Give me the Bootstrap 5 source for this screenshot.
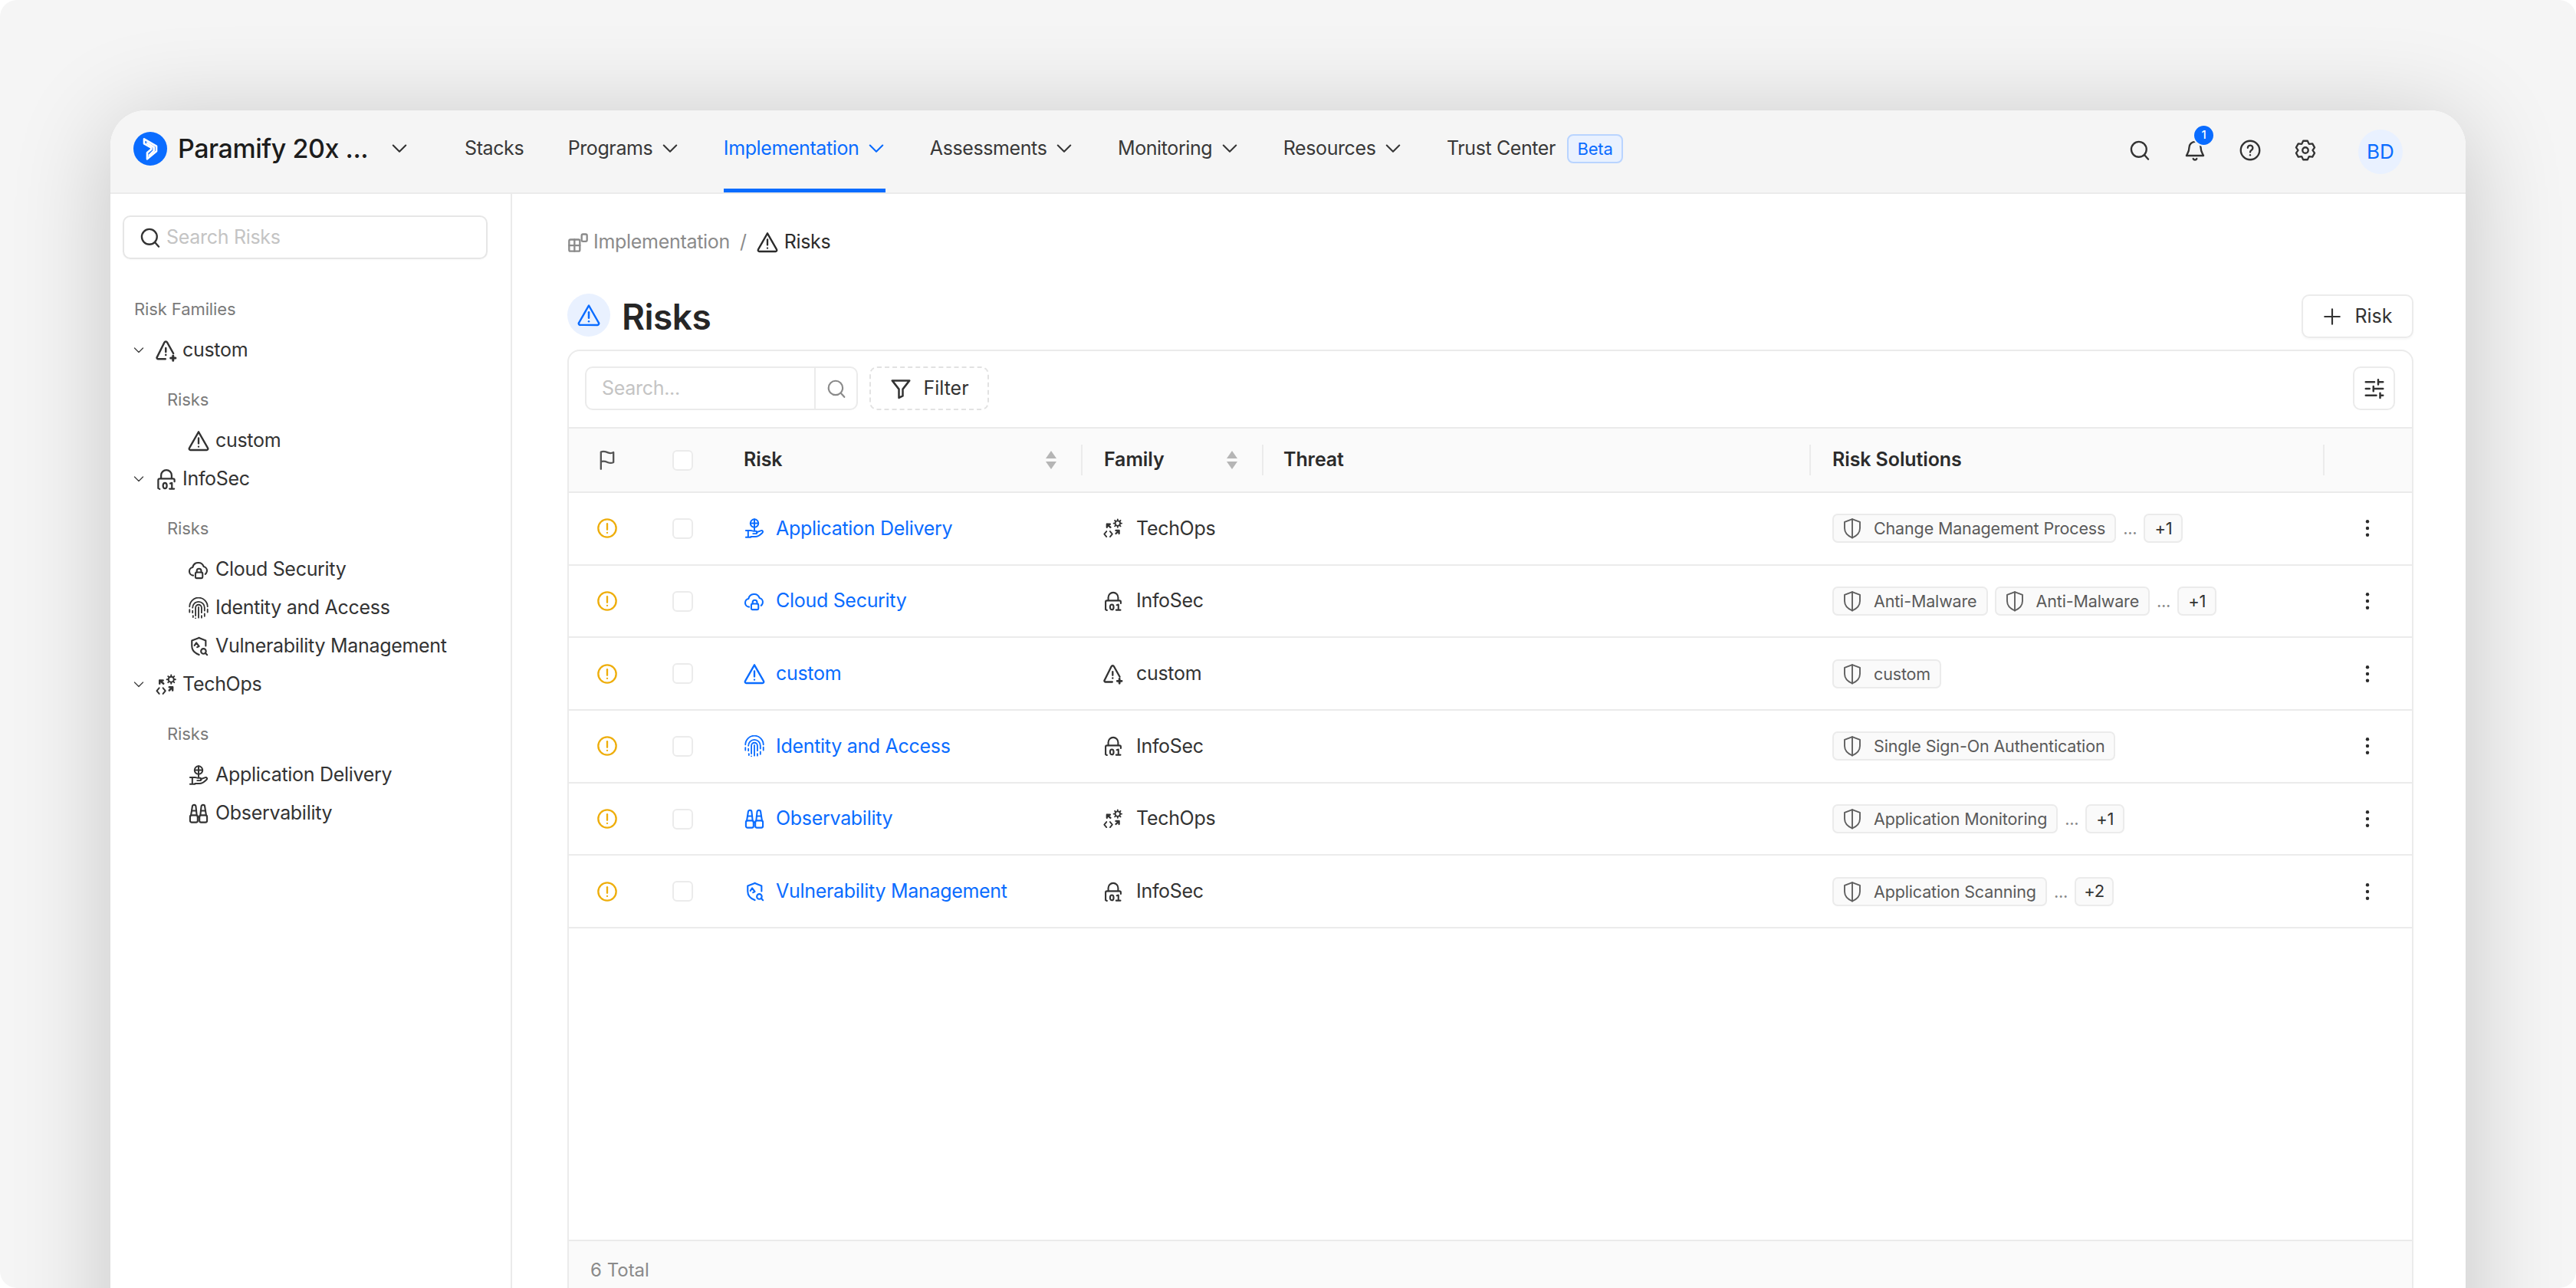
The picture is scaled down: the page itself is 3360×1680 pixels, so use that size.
<!DOCTYPE html>
<html lang="en">
<head>
    <meta charset="UTF-8">
    <meta name="viewport" content="width=device-width, initial-scale=1.0">
    <title>Risks - Paramify</title>
    <link href="https://cdn.jsdelivr.net/npm/bootstrap@5.3.3/dist/css/bootstrap.min.css" rel="stylesheet">
    <style>
        html, body { height: 1680px; margin: 0; overflow: hidden; background: #fff; }
        body { font-family: Inter, "Liberation Sans", sans-serif; color: #333; font-size: 25px; letter-spacing: -.3px; }
        svg { display: block; flex: none; fill: none; stroke: currentColor; stroke-width: 2; stroke-linecap: round; stroke-linejoin: round; }
        .sprite-sheet { position: absolute; width: 0; height: 0; }
        .stage { height: 1680px; background: #f5f5f5; border-radius: 22px; padding: 144px 144px 0; overflow: hidden; }
        .app-window { height: 1700px; background: #fff; border-radius: 46px 46px 0 0; box-shadow: 0 16px 130px rgba(0,0,0,.2); overflow: hidden; }

        .top-bar { height: 109px; background: #f5f5f5; border-bottom: 2px solid #ebebeb; padding: 0 0 0 30px; }
        .brand-dot { width: 44px; height: 44px; border-radius: 50%; background: #0a6cff; color: #fff; margin-bottom: 8px; }
        .brand-name { font-size: 34px; font-weight: 500; color: #1c1c1c; width: 245px; margin: 0 0 8px 14px; letter-spacing: -.45px; white-space: nowrap; }
        .brand-caret { width: 24px; height: 24px; margin: 0 73px 8px 32px; color: #333; }
        .top-link { height: 107px; display: flex; align-items: center; gap: 11px; color: #383838; text-decoration: none; margin-right: 57.5px; border-bottom: 5px solid transparent; padding-bottom: 2px; white-space: nowrap; letter-spacing: -.4px; }
        .top-link.is-active { color: #0a6cff; border-bottom-color: #0a6cff; }
        .top-link svg { width: 24px; height: 24px; }
        .top-link .beta-tag { margin-left: 4px; letter-spacing: -.2px; }
        .beta-tag { width: 73px; height: 38px; border: 2px solid #b9d4ff; border-radius: 8px; background: #e9f1ff; color: #0a6cff; font-size: 22px; display: flex; align-items: center; justify-content: center; }
        .top-tools { margin-left: auto; padding-right: 82px; gap: 44px; color: #333; }
        .top-tools svg { width: 28px; height: 28px; margin-bottom: 4px; }
        .bell-wrap { position: relative; }
        .bell-count { position: absolute; top: -20px; left: 11px; width: 29px; height: 29px; border-radius: 50%; background: #0a6cff; border: 2px solid #f5f5f5; color: #fff; font-size: 15px; font-weight: 500; display: flex; align-items: center; justify-content: center; letter-spacing: 0; }
        .user-dot { width: 58px; height: 58px; border-radius: 50%; background: #e9f1ff; color: #0a6cff; font-size: 26px; margin-left: 11px; letter-spacing: 0; }

        .side-col { width: 524px; flex: none; border-right: 2px solid #ebebeb; padding: 28px 0 0 16px; height: 1590px; }
        .side-search { width: 476px; height: 57px; border: 2px solid #e6e6e6; border-radius: 10px; padding-left: 20px; gap: 7px; color: #c4c4c4; box-shadow: 0 1px 2px rgba(0,0,0,.03); }
        .side-search svg { width: 28px; height: 28px; color: #333; }
        .side-title { color: #7a7a7a; font-size: 22px; margin: 52px 0 16px 15px; line-height: 26px; letter-spacing: -.1px; }
        .side-fam { height: 50px; padding-left: 13px; }
        .side-fam .tw { width: 16px; height: 16px; margin-right: 13px; color: #444; }
        .side-fam .ic { width: 30px; height: 30px; margin-right: 6px; }
        .side-sub { color: #7a7a7a; font-size: 22px; margin: 0 0 0 58px; height: 26px; line-height: 26px; letter-spacing: -.1px; }
        .side-sub-gap { padding: 26px 0 16px; }
        .side-item { height: 50px; padding-left: 85px; }
        .side-item svg { width: 28px; height: 28px; margin-right: 8px; }

        .main-col { flex: 1; padding: 0 68px 0 72px; min-width: 0; }
        .crumbs { height: 130px; padding-bottom: 4px; color: #8b8b8b; }
        .crumbs svg { width: 28px; height: 28px; }
        .crumb-first { margin-right: 6px; }
        .crumb-sep { margin: 0 13px; }
        .crumb-now { color: #2b2b2b; }
        .page-head { height: 73px; align-items: flex-start !important; }
        .head-dot { width: 56px; height: 56px; border-radius: 50%; background: #e9f1ff; color: #0a6cff; }
        .head-dot svg { width: 30px; height: 30px; }
        .head-text { font-size: 46px; font-weight: 600; color: #262626; margin-left: 15px; line-height: 60px; letter-spacing: -.5px; }
        .add-btn { margin-left: auto; margin-top: 1px; width: 146px; height: 57px; border: 2px solid #ebebeb; border-radius: 10px; background: #fff; color: #333; gap: 16px; padding: 0; box-shadow: 0 2px 3px rgba(0,0,0,.03); }
        .add-btn svg { width: 26px; height: 26px; }

        .data-box { border: 2px solid #ebebeb; border-radius: 16px 16px 0 0; height: 1300px; overflow: hidden; }
        .tool-row { height: 99px; padding: 20px 22px 0 21px; gap: 15px; align-items: flex-start !important; }
        .find-box { width: 356px; height: 57px; border: 2px solid #ebebeb; border-radius: 10px; color: #c4c4c4; }
        .find-text { flex: 1; padding-left: 20px; }
        .find-btn { width: 55px; height: 100%; border-left: 2px solid #ebebeb; color: #8a8a8a; }
        .find-btn svg { width: 26px; height: 26px; }
        .filter-btn { width: 156px; height: 57px; border: 2px dashed #e2e2e2; border-radius: 10px; color: #333; gap: 14px; background: #fff; padding: 0; }
        .filter-btn svg { width: 30px; height: 30px; }
        .tune-btn { margin-left: auto; width: 55px; height: 57px; border: 2px solid #ebebeb; border-radius: 10px; color: #333; background: #fff; padding: 0; }
        .tune-btn svg { width: 30px; height: 30px; }

        .risk-table { table-layout: fixed; width: 100%; margin: 0; border-collapse: collapse; }
        .risk-table th { background: #fafafa; height: 84px; border-top: 2px solid #ebebeb; border-bottom: 2px solid #ebebeb; font-weight: 600; color: #2b2b2b; vertical-align: middle; padding: 0; position: relative; letter-spacing: -.1px; }
        .risk-table td { height: 94.7px; border-bottom: 2px solid #ebebeb; vertical-align: middle; padding: 0; color: #333; }
        .risk-table th:nth-child(1), .risk-table th:nth-child(2) { width: 99px; }
        .risk-table th:nth-child(3) { width: 470px; }
        .risk-table th:nth-child(4) { width: 236px; }
        .risk-table th:nth-child(5) { width: 714px; }
        .risk-table th:nth-child(6) { width: 670px; }
        .col-sep::before { content: ""; position: absolute; left: 0; top: 21px; height: 40px; width: 2px; background: #ebebeb; }
        .risk-table .p30 { padding-left: 30px; }
        .risk-table .p28 { padding-left: 28px; }
        .flag-ic { width: 28px; height: 28px; margin: 0 auto; color: #555; }
        .warn-ic { width: 28px; height: 28px; margin: 0 auto; color: #eeae0c; }
        .tick { width: 27px; height: 27px; border: 2px solid #ebebeb; border-radius: 6px; margin: 0 auto; background: #fff; }
        .sort-ic { width: 16px; height: 26px; margin-left: auto; margin-right: 31px; color: #b5b5b5; }
        .sort-ic path { fill: currentColor; stroke: none; }
        .risk-link { color: #0a6cff; text-decoration: none; gap: 14px; }
        .risk-link svg, .fam-cell svg { width: 28px; height: 28px; }
        .fam-cell { gap: 16px; }
        .sol-tag { height: 38px; border: 2px solid #ebebeb; border-radius: 7px; background: #fafafa; color: #5a5a5a; font-size: 21.5px; letter-spacing: -.15px; padding: 0 12px 0 9px; gap: 13px; white-space: nowrap; }
        .sol-tag svg { width: 30px; height: 30px; color: #5e5e5e; stroke-width: 1.5; }
        .more-dots { color: #8a8a8a; font-size: 22px; line-height: 1; }
        .more-num { width: 51px; height: 38px; border: 2px solid #ebebeb; border-radius: 7px; background: #fafafa; color: #333; font-size: 22px; }
        .tags { gap: 9px; }
        .kebab { width: 28px; height: 28px; margin: 0 auto; color: #2b2b2b; }
        .table-foot { background: #fafafa; border-top: 2px solid #ebebeb; height: 90px; margin-top: 406px; padding: 20px 0 0 28px; color: #8a8a8a; font-size: 24px; letter-spacing: 0; }
    </style>
</head>
<body>
<!-- icon sprites -->
<svg class="sprite-sheet">
    <defs>
        <symbol id="i-warn" viewBox="0 0 24 24"><path d="M12 2 1.700 20a1.500 1.500 0 0 0 1.300 2.300h18a1.500 1.500 0 0 0 1.300-2.300z"/><path d="M12 9v6"/><path d="M12 18.500v.1"/></symbol>
        <symbol id="i-warnplus" viewBox="0 0 24 24"><path d="M11 21H3.200a1.200 1.200 0 0 1-1-1.800L10 3.600a1.600 1.600 0 0 1 2.800 0l6.500 11.600"/><path d="M11.400 9.500v4"/><path d="M11.400 16.600v.1"/><path d="M19 17.500v5M16.500 20h5" stroke-width="2.400"/></symbol>
        <symbol id="i-lock" viewBox="0 0 24 24" stroke-width="1.800"><path d="M6.500 11V8a5.500 5.500 0 0 1 11 0v3"/><path d="M20.500 14.500V13a1.500 1.500 0 0 0-1.500-1.500H5A1.500 1.500 0 0 0 3.500 13v8.500l1.500.8"/><ellipse cx="10.500" cy="18.800" rx="2" ry="2.900"/><path d="M16 16.500l1.800-.6v6M15.300 22h4.800"/></symbol>
        <symbol id="i-cloud" viewBox="0 0 24 24" stroke-width="1.800"><path d="M6 18.500a4.600 4.600 0 0 1-.6-9.100 6.400 6.400 0 0 1 12.300-.9 4.800 4.800 0 0 1 3.600 5.500 4.700 4.700 0 0 1-1.800 3"/><rect x="8.500" y="15" width="8" height="6.500" rx="1.200"/><path d="M10 15v-1.600a2.500 2.500 0 0 1 5 0V15"/></symbol>
        <symbol id="i-finger" viewBox="2.500 1.500 19 21.500" stroke-width="1.400"><path d="M3 11a9 9 0 0 1 18 0"/><path d="M6 12a6 6 0 0 1 12 0v3"/><path d="M9 20v-8a3 3 0 0 1 6 0v5"/><path d="M12 11.500V22"/><path d="M3 14v2.500M6 15v2M6.500 20v1.500M18 18v2.500M21 13.500v3M15 20v2M9 22.500v.1"/></symbol>
        <symbol id="i-vuln" viewBox="0 0 24 24" stroke-width="1.800"><path d="M12.500 2.500 4.500 5.500v6c0 4.800 3 8 8 10"/><path d="M12.500 2.500 20 5.500v6"/><path d="M7.500 11l2-3 3 4-2 1"/><circle cx="17.500" cy="17.500" r="2.800"/><path d="m19.600 19.600 2 2"/></symbol>
        <symbol id="i-ops" viewBox="0 0 24 24" stroke-width="1.600"><circle cx="17" cy="6.500" r="2.800"/><path d="M17 2v1.200M17 9.800V11M12.500 6.500h1.200M20.300 6.500h1.200M13.800 3.300l.8.800M19.400 8.900l.8.800M20.200 3.300l-.8.800M13.800 9.700l.8-.8"/><path d="M5 7.500 9 11M5 11V7.500h3.500" stroke-width="2"/><path d="M18.500 14.500 15 18M18.500 18v-3.500H15" stroke-width="2"/><path d="M4.500 15.500l-2.500 3 2.500 3M8.500 15.500l2.500 3-2.500 3"/></symbol>
        <symbol id="i-deliver" viewBox="0 0 24 24" stroke-width="1.700"><circle cx="12" cy="6.500" r="4.500"/><path d="M12 2v9M8 6.500h8"/><path d="M12 11v3"/><path d="M2.500 14.500h5.500c1.500 0 2 .8 3 .8h2.500a1.400 1.400 0 0 1 0 2.800h-3"/><path d="M14.500 16.500l5-1.800c1.600-.5 2.700 1.200 1.400 2.400-2.500 2.500-5 4.400-8 4.400H8"/><path d="M5 14.500V22M2.500 22H8"/></symbol>
        <symbol id="i-bino" viewBox="0 0 24 24" stroke-width="1.800"><rect x="2.500" y="14" width="8.500" height="8" rx="1.800"/><rect x="13" y="14" width="8.500" height="8" rx="1.800"/><path d="M3.500 14 5 4.500a2 2 0 0 1 4 0L10 14"/><path d="M14 14l1-9.500a2 2 0 0 1 4 0L20.500 14"/><path d="M11 16h2M4.500 9h5M14.500 9h5"/></symbol>
        <symbol id="i-shield" viewBox="0 0 24 24"><path d="M12 2.500 4 5.500v6.500c0 4.500 3.500 8 8 10 4.500-2 8-5.500 8-10V5.500z"/><path d="M12 2.500V22"/></symbol>
        <symbol id="i-chev" viewBox="0 0 16 16" stroke-width="1.400"><path d="m2.500 5 5.500 5.500L13.500 5"/></symbol>
        <symbol id="i-search" viewBox="0 0 24 24"><circle cx="11" cy="11" r="8.500"/><path d="m17.500 17.500 4 4.500"/></symbol>
        <symbol id="i-warncircle" viewBox="0 0 24 24"><circle cx="12" cy="12" r="10"/><path d="M12 7v6.500"/><path d="M12 17v.1"/></symbol>
        <symbol id="i-kebab" viewBox="0 0 24 24"><circle cx="12" cy="4.500" r="1.900" fill="currentColor" stroke="none"/><circle cx="12" cy="12" r="1.900" fill="currentColor" stroke="none"/><circle cx="12" cy="19.500" r="1.900" fill="currentColor" stroke="none"/></symbol>
    </defs>
</svg>

<div class="stage">
    <div class="app-window">
        <div class="top-bar d-flex align-items-center">
            <div class="brand-dot d-flex align-items-center justify-content-center">
                <svg width="32" height="32" viewBox="0 0 24 24" stroke-width=".9"><path d="M6 2.500l12 7v5L9 22v-6l4-3.500V11L6 7z"/><path d="M9 6.500l6.500 4v3.500L11 18.500"/></svg>
            </div>
            <div class="brand-name">Paramify 20x ...</div>
            <svg class="brand-caret"><use href="#i-chev"/></svg>
            <a class="top-link">Stacks</a>
            <a class="top-link">Programs <svg><use href="#i-chev"/></svg></a>
            <a class="top-link is-active">Implementation <svg><use href="#i-chev"/></svg></a>
            <a class="top-link">Assessments <svg><use href="#i-chev"/></svg></a>
            <a class="top-link">Monitoring <svg><use href="#i-chev"/></svg></a>
            <a class="top-link">Resources <svg><use href="#i-chev"/></svg></a>
            <a class="top-link">Trust Center <span class="beta-tag">Beta</span></a>
            <div class="top-tools d-flex align-items-center">
                <svg><use href="#i-search"/></svg>
                <div class="bell-wrap">
                    <svg viewBox="0 0 24 24"><path d="M18.500 9a6.500 6.500 0 0 0-13 0c0 5.500-2.500 7-3 9h19c-.5-2-3-3.500-3-9z"/><path d="M10 21.500a2.200 2.200 0 0 0 4 0"/></svg>
                    <span class="bell-count">1</span>
                </div>
                <svg viewBox="0 0 24 24"><circle cx="12" cy="12" r="10.500"/><path d="M9.300 9.300a2.800 2.800 0 1 1 4.300 2.400c-1 .7-1.600 1.200-1.600 2.500"/><path d="M12 17.300v.1"/></svg>
                <svg viewBox="0 0 24 24"><circle cx="12" cy="12" r="3.200"/><path id="gearPath"/></svg>
                <div class="user-dot d-flex align-items-center justify-content-center">BD</div>
            </div>
        </div>

        <div class="d-flex">
            <aside class="side-col">
                <div class="side-search d-flex align-items-center"><svg><use href="#i-search"/></svg>Search Risks</div>
                <div class="side-title">Risk Families</div>
                <div id="sideTree"></div>
            </aside>

            <main class="main-col">
                <div class="crumbs d-flex align-items-center">
                    <svg viewBox="0 0 24 24" stroke-width="1.700" class="crumb-first"><rect x="2" y="9" width="12" height="13" rx="1.500"/><path d="M2 15.500h12M8 9v13"/><rect x="16" y="3" width="6" height="8" rx="1.500"/></svg>
                    Implementation
                    <span class="crumb-sep">/</span>
                    <svg class="crumb-now me-2"><use href="#i-warn"/></svg>
                    <span class="crumb-now">Risks</span>
                </div>
                <div class="page-head d-flex align-items-center">
                    <div class="head-dot d-flex align-items-center justify-content-center"><svg><use href="#i-warn"/></svg></div>
                    <div class="head-text">Risks</div>
                    <button class="add-btn d-flex align-items-center justify-content-center" type="button">
                        <svg viewBox="0 0 24 24"><path d="M12 3v18M3 12h18"/></svg>Risk
                    </button>
                </div>
                <div class="data-box">
                    <div class="tool-row d-flex align-items-center">
                        <div class="find-box d-flex align-items-center">
                            <div class="find-text">Search...</div>
                            <div class="find-btn d-flex align-items-center justify-content-center"><svg><use href="#i-search"/></svg></div>
                        </div>
                        <button class="filter-btn d-flex align-items-center justify-content-center" type="button">
                            <svg viewBox="0 0 24 24"><path d="M3 3.500h18l-7 9v7l-4 2v-9z"/></svg>Filter
                        </button>
                        <button class="tune-btn d-flex align-items-center justify-content-center" type="button">
                            <svg viewBox="0 0 24 24"><path d="M3 5h9M16 5h5M16 2.500v5M3 12h4M11 12h10M11 9.500v5M3 19h11M18 19h3M18 16.500v5"/></svg>
                        </button>
                    </div>
                    <table class="risk-table">
                        <thead>
                            <tr>
                                <th><svg class="flag-ic" viewBox="0 0 24 24"><path d="M5 22V3c3-1.500 6 0 8 .8s4 .8 6-.3v11c-2 1.100-4 1.100-6 .3s-5-2.300-8-.8"/></svg></th>
                                <th><div class="tick"></div></th>
                                <th class="p30"><div class="d-flex align-items-center">Risk<svg class="sort-ic" viewBox="0 0 16 26"><path d="M8 1l7 10H1zM8 25l7-10H1z"/></svg></div></th>
                                <th class="p30 col-sep"><div class="d-flex align-items-center">Family<svg class="sort-ic" viewBox="0 0 16 26"><path d="M8 1l7 10H1zM8 25l7-10H1z"/></svg></div></th>
                                <th class="p28 col-sep">Threat</th>
                                <th class="p30 col-sep">Risk Solutions</th>
                                <th class="col-sep"></th>
                            </tr>
                        </thead>
                        <tbody id="riskRows"></tbody>
                    </table>
                    <div class="table-foot">6 Total</div>
                </div>
            </main>
        </div>
    </div>
</div>

<script src="https://cdn.jsdelivr.net/npm/bootstrap@5.3.3/dist/js/bootstrap.bundle.min.js"></script>
<script>
    const icon = (name) => `<svg><use href="#i-${name}"/></svg>`;

    // six tooth gear outline
    const gearPts = [];
    for (let k = 0; k < 6; k++) {
        const a = 90 + 60 * k;
        [[8.2, -29], [10.8, -13], [10.8, 13], [8.2, 29]].forEach(([r, d]) => {
            const t = (a + d) * Math.PI / 180;
            gearPts.push((12 + r * Math.cos(t)).toFixed(2) + ' ' + (12 - r * Math.sin(t)).toFixed(2));
        });
    }
    document.getElementById('gearPath').setAttribute('d', 'M' + gearPts.join('L') + 'z');

    const tree = [
        { name: 'custom', icon: 'warnplus', items: [['custom', 'warn']] },
        { name: 'InfoSec', icon: 'lock', items: [['Cloud Security', 'cloud'], ['Identity and Access', 'finger'], ['Vulnerability Management', 'vuln']] },
        { name: 'TechOps', icon: 'ops', items: [['Application Delivery', 'deliver'], ['Observability', 'bino']] }
    ];

    document.getElementById('sideTree').innerHTML = tree.map((fam) => `
        <div class="side-fam d-flex align-items-center">
            <svg class="tw"><use href="#i-chev"/></svg>
            <svg class="ic"><use href="#i-${fam.icon}"/></svg>${fam.name}
        </div>
        <div class="side-sub-gap"><div class="side-sub">Risks</div></div>
        ${fam.items.map(([label, ic]) => `<div class="side-item d-flex align-items-center">${icon(ic)}${label}</div>`).join('')}
    `).join('');

    const rows = [
        ['Application Delivery', 'deliver', 'TechOps', 'ops', ['Change Management Process'], 1],
        ['Cloud Security', 'cloud', 'InfoSec', 'lock', ['Anti-Malware', 'Anti-Malware'], 1],
        ['custom', 'warn', 'custom', 'warnplus', ['custom'], 0],
        ['Identity and Access', 'finger', 'InfoSec', 'lock', ['Single Sign-On Authentication'], 0],
        ['Observability', 'bino', 'TechOps', 'ops', ['Application Monitoring'], 1],
        ['Vulnerability Management', 'vuln', 'InfoSec', 'lock', ['Application Scanning'], 2]
    ];

    document.getElementById('riskRows').innerHTML = rows.map(([risk, ric, fam, fic, sols, more]) => `
        <tr>
            <td><svg class="warn-ic"><use href="#i-warncircle"/></svg></td>
            <td><div class="tick"></div></td>
            <td class="p30"><a class="risk-link d-flex align-items-center">${icon(ric)}${risk}</a></td>
            <td class="p28"><div class="fam-cell d-flex align-items-center">${icon(fic)}${fam}</div></td>
            <td></td>
            <td class="p30"><div class="tags d-flex align-items-center">
                ${sols.map((s) => `<span class="sol-tag d-flex align-items-center">${icon('shield')}${s}</span>`).join('')}
                ${more ? `<span class="more-dots">...</span><span class="more-num d-flex align-items-center justify-content-center">+${more}</span>` : ''}
            </div></td>
            <td><svg class="kebab"><use href="#i-kebab"/></svg></td>
        </tr>
    `).join('');
</script>
</body>
</html>
